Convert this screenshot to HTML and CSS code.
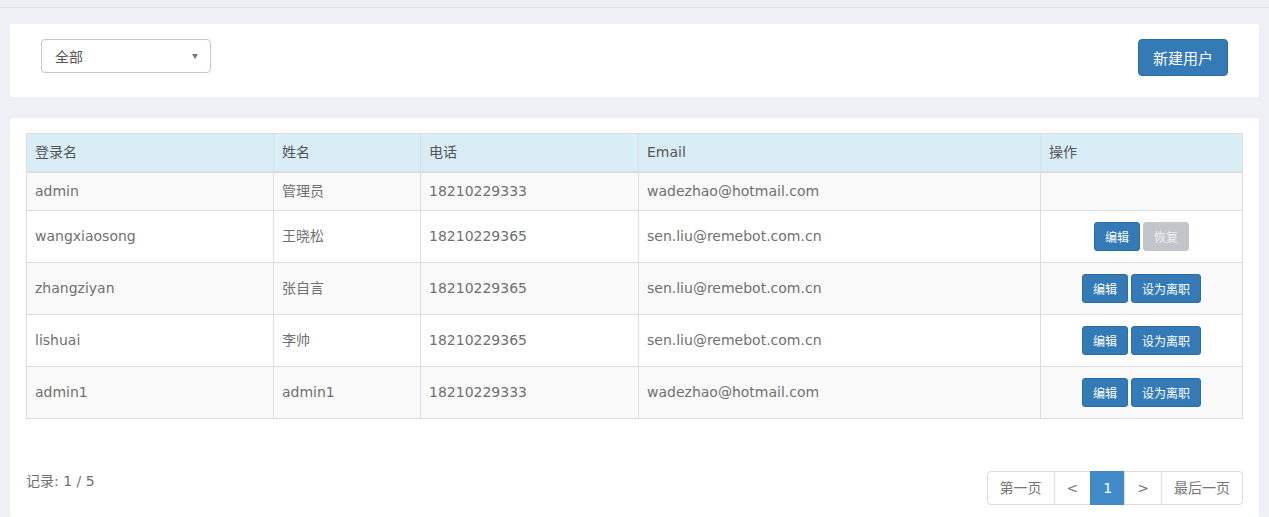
FILE: index.html
```html
<!DOCTYPE html>
<html lang="zh-CN">
<head>
<meta charset="utf-8">
<title>用户管理</title>
<link rel="stylesheet" href="styles.css">
</head>
<body>
<div class="topbar"></div>
<div class="content">
  <div class="panel toolbar">
    <div class="select">
      <span>全部</span>
      <span class="caret"></span>
    </div>
    <button class="btn-primary">新建用户</button>
  </div>
  <div class="panel list">
    <table class="grid">
      <thead>
        <tr>
          <th class="c1">登录名</th>
          <th class="c2">姓名</th>
          <th class="c3">电话</th>
          <th class="c4">Email</th>
          <th class="c5">操作</th>
        </tr>
      </thead>
      <tbody>
        <tr class="odd">
          <td>admin</td><td>管理员</td><td>18210229333</td><td>wadezhao@hotmail.com</td><td></td>
        </tr>
        <tr>
          <td>wangxiaosong</td><td>王晓松</td><td>18210229365</td><td>sen.liu@remebot.com.cn</td>
          <td><div class="ops"><button class="btn-sm">编辑</button><button class="btn-sm grey">恢复</button></div></td>
        </tr>
        <tr class="odd">
          <td>zhangziyan</td><td>张自言</td><td>18210229365</td><td>sen.liu@remebot.com.cn</td>
          <td><div class="ops"><button class="btn-sm">编辑</button><button class="btn-sm">设为离职</button></div></td>
        </tr>
        <tr>
          <td>lishuai</td><td>李帅</td><td>18210229365</td><td>sen.liu@remebot.com.cn</td>
          <td><div class="ops"><button class="btn-sm">编辑</button><button class="btn-sm">设为离职</button></div></td>
        </tr>
        <tr class="odd">
          <td>admin1</td><td>admin1</td><td>18210229333</td><td>wadezhao@hotmail.com</td>
          <td><div class="ops"><button class="btn-sm">编辑</button><button class="btn-sm">设为离职</button></div></td>
        </tr>
      </tbody>
    </table>
    <div class="footer">
      <div class="count">记录: 1 / 5</div>
      <ul class="pager">
        <li>第一页</li>
        <li>&lt;</li>
        <li class="active">1</li>
        <li>&gt;</li>
        <li>最后一页</li>
      </ul>
    </div>
  </div>
</div>
</body>
</html>
```
FILE: styles.css
```css
* { box-sizing: border-box; }
html, body { margin: 0; padding: 0; }
body {
  background: #eff0f5;
  font-family: "DejaVu Sans", "Noto Sans CJK SC", sans-serif;
  font-size: 14px;
  color: #707070;
  height: 517px;
  overflow: hidden;
}
.topbar {
  height: 8px;
  border-bottom: 1px solid #e1e2e7;
}
.content {
  padding: 16px 10px 0 10px;
}
.panel {
  background: #fff;
  border-radius: 3px;
}
.toolbar {
  height: 73px;
  padding: 15px 31px 0 31px;
  display: flex;
  justify-content: space-between;
  align-items: flex-start;
}
.select {
  width: 170px;
  height: 34px;
  border: 1px solid #c8c8c8;
  border-radius: 4px;
  display: flex;
  align-items: center;
  justify-content: space-between;
  padding: 0 12px 0 13px;
  color: #555;
  font-size: 14px;
}
.caret {
  width: 0;
  height: 0;
  border-left: 3.5px solid transparent;
  border-right: 3.5px solid transparent;
  border-top: 5px solid #777;
}
.btn-primary {
  height: 37px;
  width: 90px;
  background: #337ab7;
  border: 1px solid #2e6da4;
  border-radius: 4px;
  color: #fff;
  font-family: "Noto Sans CJK SC", sans-serif;
  font-size: 15px;
  padding: 0;
}
.list {
  margin-top: 21px;
  padding: 15px 16px 0 16px;
  height: 399px;
}
.grid {
  width: 100%;
  border-collapse: collapse;
  border: 1px solid #ddd;
}
.grid th, .grid td {
  border: 1px solid #ddd;
  padding: 8px 8px;
  text-align: left;
  vertical-align: middle;
  line-height: 21px;
}
.grid th {
  background: #d9edf7;
  font-weight: normal;
  color: #555;
  line-height: 21px;
  border-bottom: 2px solid #ddd;
}
.grid tr.odd td { background: #f9f9f9; }
.c1 { width: 247px; }
.c2 { width: 147px; }
.c3 { width: 218px; }
.c4 { width: 402px; }
.ops {
  display: flex;
  justify-content: center;
  gap: 3px;
  margin: 3px 0;
}
.btn-sm {
  height: 29px;
  padding: 0 10px;
  font-family: "Noto Sans CJK SC", sans-serif;
  font-size: 12px;
  color: #fff;
  background: #337ab7;
  border: 1px solid #2e6da4;
  border-radius: 3px;
}
.btn-sm.grey {
  background: #c2c6ca;
  border-color: #c2c6ca;
  color: #f0f1f3;
}
.footer {
  margin-top: 52px;
  display: flex;
  justify-content: space-between;
  align-items: flex-start;
}
.count {
  line-height: 20px;
}
.pager {
  list-style: none;
  margin: 0;
  padding: 0;
  display: flex;
}
.pager li {
  height: 34px;
  padding: 6px 12px;
  line-height: 20px;
  border: 1px solid #ddd;
  margin-left: -1px;
  color: #777;
  font-size: 14px;
}
.pager li:first-child { border-radius: 4px 0 0 4px; margin-left: 0; }
.pager li:last-child { border-radius: 0 4px 4px 0; }
.pager li.active {
  background: #428bca;
  border-color: #428bca;
  color: #fff;
}
```
